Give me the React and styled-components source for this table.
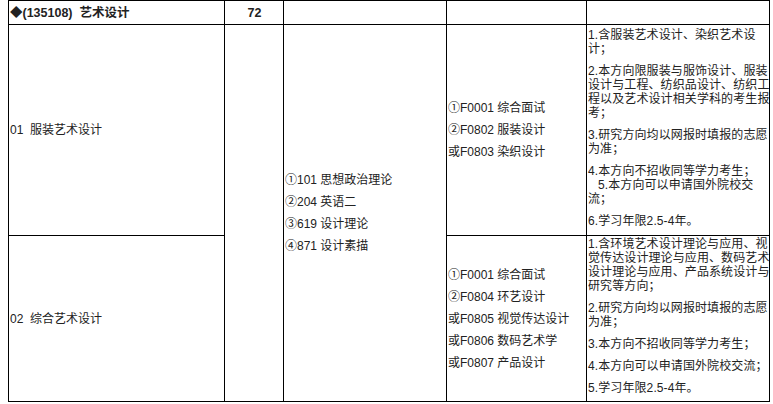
import React from "react";
import styled, { createGlobalStyle } from "styled-components";

const GlobalStyle = createGlobalStyle`
  html, body {
    margin: 0;
    padding: 0;
    background: #fff;
  }
  body {
    font-family: "Liberation Sans", "Noto Sans CJK SC", sans-serif;
    color: #222;
  }
`;

const Page = styled.div`
  padding-left: 8px;
`;

const Table = styled.table`
  border-collapse: collapse;
  table-layout: fixed;
  width: 761px;
  font-size: 12px;
`;

const Row = styled.tr`
  height: ${({ $h }) => $h}px;
`;

const Cell = styled.td`
  border: 1px solid #000;
  padding: 0 0 0 1px;
  vertical-align: ${({ $valign }) => $valign || "middle"};
  text-align: ${({ $align }) => $align || "left"};
  font-weight: ${({ $bold }) => ($bold ? 700 : 400)};
  font-size: ${({ $bold }) => ($bold ? "12.5px" : "12px")};
  line-height: 16px;
  white-space: nowrap;
  overflow: hidden;
`;

const Line = styled.p`
  margin: 0;
  line-height: 22px;
`;

const Notes = styled.div`
  display: flex;
  flex-direction: column;
  gap: 8px;
  padding-top: ${({ $top }) => $top}px;
`;

const Note = styled.p`
  margin: 0;
  line-height: 14px;
  letter-spacing: 0.1px;
`;

const Indent = styled.span`
  padding-left: 10px;
`;

const exams = ["①101 思想政治理论", "②204 英语二", "③619 设计理论", "④871 设计素描"];

const majors = [
  {
    name: "01\u00a0\u00a0服装艺术设计",
    height: 211,
    top: 3,
    retest: ["①F0001 综合面试", "②F0802 服装设计", "或F0803 染织设计"],
    notes: [
      ["1.含服装艺术设计、染织艺术设", "计；"],
      ["2.本方向限服装与服饰设计、服装", "设计与工程、纺织品设计、纺织工", "程以及艺术设计相关学科的考生报", "考；"],
      ["3.研究方向均以网报时填报的志愿", "为准；"],
      ["4.本方向不招收同等学力考生；", <Indent key="i">5.本方向可以申请国外院校交</Indent>, "流；"],
      ["6.学习年限2.5-4年。"],
    ],
  },
  {
    name: "02\u00a0\u00a0综合艺术设计",
    height: 166,
    top: 1,
    retest: ["①F0001 综合面试", "②F0804 环艺设计", "或F0805 视觉传达设计", "或F0806 数码艺术学", "或F0807 产品设计"],
    notes: [
      ["1.含环境艺术设计理论与应用、视", "觉传达设计理论与应用、数码艺术", "设计理论与应用、产品系统设计与", "研究等方向；"],
      ["2.研究方向均以网报时填报的志愿", "为准；"],
      ["3.本方向不招收同等学力考生；"],
      ["4.本方向可以申请国外院校交流；"],
      ["5.学习年限2.5-4年。"],
    ],
  },
];

const App = () => (
  <Page>
    <GlobalStyle />
    <Table>
      <colgroup>
        <col style={{ width: 216 }} />
        <col style={{ width: 59 }} />
        <col style={{ width: 163 }} />
        <col style={{ width: 140 }} />
        <col style={{ width: 183 }} />
      </colgroup>
      <tbody>
        <Row $h={24}>
          <Cell $bold>◆(135108)&nbsp;&nbsp;艺术设计</Cell>
          <Cell $bold $align="center">72</Cell>
          <Cell />
          <Cell />
          <Cell />
        </Row>
        {majors.map((m, i) => (
          <Row key={m.name} $h={m.height}>
            <Cell>{m.name}</Cell>
            {i === 0 && <Cell rowSpan={2} />}
            {i === 0 && (
              <Cell rowSpan={2}>
                {exams.map((e) => (
                  <Line key={e}>{e}</Line>
                ))}
              </Cell>
            )}
            <Cell>
              {m.retest.map((r) => (
                <Line key={r}>{r}</Line>
              ))}
            </Cell>
            <Cell $valign="top">
              <Notes $top={m.top}>
                {m.notes.map((n, j) => (
                  <Note key={j}>
                    {n.map((t, k) => (
                      <React.Fragment key={k}>
                        {k > 0 && <br />}
                        {t}
                      </React.Fragment>
                    ))}
                  </Note>
                ))}
              </Notes>
            </Cell>
          </Row>
        ))}
      </tbody>
    </Table>
  </Page>
);

export default App;
